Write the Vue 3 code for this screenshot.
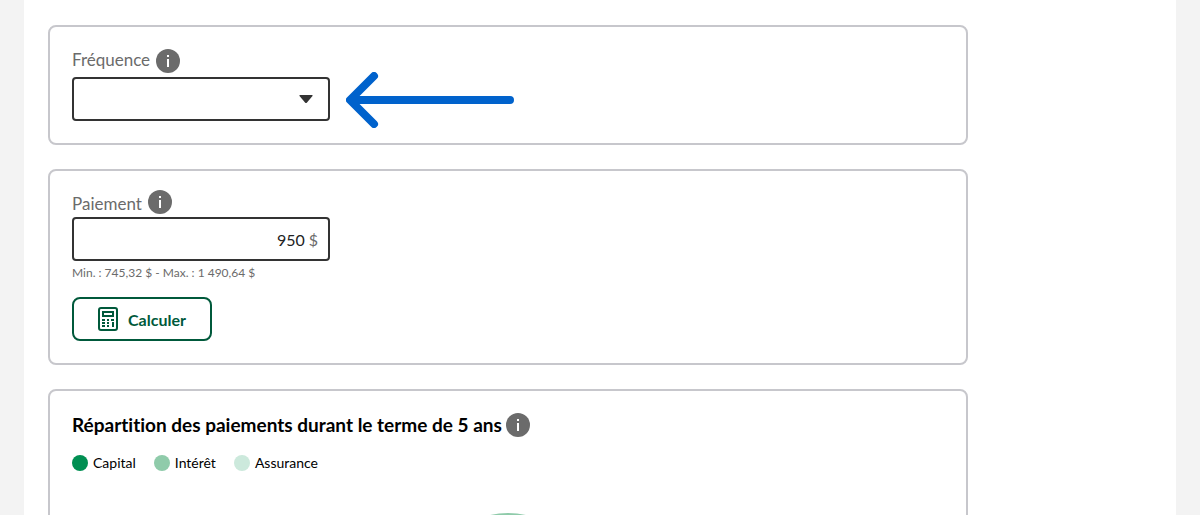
<script setup>
import { ref } from 'vue'

const frequency = ref('')
const payment = ref('950')
const legend = [
  { name: 'Capital', tone: 'capital' },
  { name: 'Intérêt', tone: 'interest' },
  { name: 'Assurance', tone: 'insurance' }
]
</script>

<template>
  <div class="page">
    <main class="sheet">
      <section class="card">
        <div class="label-row">
          <label for="frequency">Fréquence</label>
          <button type="button" class="info" aria-label="Information">
            <svg viewBox="0 0 24 24"><circle cx="12" cy="12" r="12" /><path d="M11 10h2v8h-2zM11 6h2v2h-2z" /></svg>
          </button>
        </div>
        <div class="select-row">
          <div class="select-box">
            <select id="frequency" v-model="frequency" class="field">
              <option value=""></option>
              <option value="m">Mensuel</option>
              <option value="h">Hebdomadaire</option>
            </select>
            <svg class="caret" viewBox="0 0 14 8"><path d="M1 0h12q1 0 .5 1L8 7.500q-1 1-2 0L.5 1Q0 0 1 0z" /></svg>
          </div>
          <svg class="arrow" viewBox="0 0 168 56"><path d="M164 28H5M28 4L4 28l24 24" /></svg>
        </div>
      </section>

      <section class="card payment">
        <div class="label-row">
          <label for="payment">Paiement</label>
          <button type="button" class="info" aria-label="Information">
            <svg viewBox="0 0 24 24"><circle cx="12" cy="12" r="12" /><path d="M11 10h2v8h-2zM11 6h2v2h-2z" /></svg>
          </button>
        </div>
        <div class="field amount">
          <input id="payment" v-model="payment" type="text" inputmode="decimal" />
          <span>$</span>
        </div>
        <p class="hint">Min. : 745,32 $ - Max. : 1 490,64 $</p>
        <button type="button" class="calculate">
          <svg viewBox="0 0 20 24">
            <rect class="line" x="1" y="1" width="18" height="22" rx="2" />
            <rect class="line" x="5" y="5" width="10" height="4" />
            <path d="M4 12h3v2H4zM9 12h2v2H9zM13 12h3v2h-3zM4 15h3v2H4zM9 15h2v2H9zM4 18h3v2H4zM9 18h2v2H9zM14 15h2v5h-2z" />
          </svg>
          Calculer
        </button>
      </section>

      <section class="card">
        <div class="label-row title-row">
          <h2>Répartition des paiements durant le terme de 5 ans</h2>
          <button type="button" class="info" aria-label="Information">
            <svg viewBox="0 0 24 24"><circle cx="12" cy="12" r="12" /><path d="M11 10h2v8h-2zM11 6h2v2h-2z" /></svg>
          </button>
        </div>
        <ul class="legend">
          <li v-for="item in legend" :key="item.name">
            <span class="dot" :class="item.tone"></span>{{ item.name }}
          </li>
        </ul>
        <svg class="donut" viewBox="0 0 160 160"><circle cx="80" cy="80" r="66" /></svg>
      </section>
    </main>
  </div>
</template>

<style>
body {
  margin: 0;
}
</style>

<style scoped>
.page {
  box-sizing: border-box;
  height: 100vh;
  overflow: hidden;
  padding: 0 24px;
  background: #f3f3f3;
  font-family: Lato, "Liberation Sans", sans-serif;
  font-size: 17px;
  font-variant-ligatures: none;
  color: #000;
}
.sheet {
  display: flex;
  flex-direction: column;
  gap: 24px;
  min-height: 100%;
  box-sizing: border-box;
  padding: 25px 24px;
  background: #fff;
}
.card {
  box-sizing: border-box;
  width: 100%;
  max-width: 920px;
  padding: 22px;
  border: 2px solid #c7c7cc;
  border-radius: 8px;
}
.label-row {
  display: flex;
  gap: 6px;
  margin-bottom: 4px;
  line-height: 22px;
  color: #6b6b6b;
}
.payment {
  padding-top: 19px;
}
.payment .label-row {
  align-items: flex-end;
  margin-bottom: 3px;
  line-height: 20px;
}
.info {
  width: 24px;
  height: 24px;
  padding: 0;
  border: 0;
  background: none;
}
.info svg {
  display: block;
  fill: #6b6b6b;
}
.info path {
  fill: #fff;
}
.select-row {
  display: flex;
  align-items: center;
  gap: 16px;
}
.select-box {
  position: relative;
  width: 258px;
}
.field {
  box-sizing: border-box;
  display: block;
  width: 258px;
  height: 44px;
  border: 2px solid #333;
  border-radius: 4px;
  background: #fff;
  font: inherit;
}
select.field {
  appearance: none;
  padding: 0 40px 0 10px;
}
.caret {
  position: absolute;
  right: 17px;
  top: 18px;
  width: 14px;
  fill: #333;
  pointer-events: none;
}
.arrow {
  width: 168px;
  height: 56px;
  margin: -5px 0 -7px;
  fill: none;
  stroke: #0062cc;
  stroke-width: 8px;
  stroke-linecap: round;
  stroke-linejoin: round;
}
.amount {
  display: flex;
  align-items: center;
  gap: 4px;
  padding: 0 10px;
  font-size: 16px;
  color: #6b6b6b;
}
.amount input {
  flex: 1;
  min-width: 0;
  padding: 0;
  border: 0;
  outline: 0;
  background: none;
  font: inherit;
  color: #222;
  text-align: right;
}
.hint {
  margin: 4px 0 16px;
  font-size: 12px;
  line-height: 16px;
  color: #6b6b6b;
}
.calculate {
  display: flex;
  align-items: center;
  gap: 10px;
  height: 44px;
  padding: 0 24px;
  border: 2px solid #00593b;
  border-radius: 8px;
  background: #fff;
  font: inherit;
  font-size: 16px;
  font-weight: 700;
  color: #00593b;
}
.calculate svg {
  width: 20px;
  height: 24px;
  fill: #00593b;
}
.calculate .line {
  fill: none;
  stroke: #00593b;
  stroke-width: 2px;
}
.title-row {
  gap: 4px;
  margin-bottom: 18px;
  line-height: 24px;
}
h2 {
  margin: 0;
  font-size: 19px;
  font-weight: 700;
  color: #000;
}
.legend {
  display: flex;
  gap: 18px;
  margin: 0 0 42px;
  padding: 0;
  list-style: none;
  font-size: 14px;
  line-height: 16px;
}
.legend li {
  display: flex;
  gap: 5px;
}
.dot {
  width: 16px;
  height: 16px;
  border-radius: 50%;
}
.capital {
  background: #008f52;
}
.interest {
  background: #8fcbaa;
}
.insurance {
  background: #cce9dc;
}
.donut {
  display: block;
  width: 160px;
  margin: 0 auto;
  fill: none;
  stroke: #8fcbaa;
  stroke-width: 28px;
}
</style>
